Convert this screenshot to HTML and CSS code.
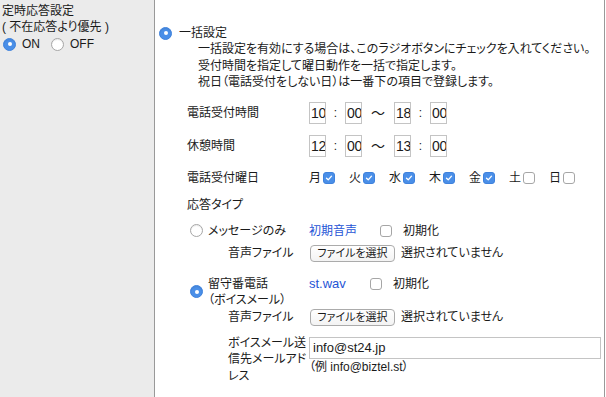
FILE: index.html
```html
<!DOCTYPE html>
<html>
<head>
  <title>定時応答設定</title>
  <link rel="stylesheet" href="styles.css">
</head>
<body>
  <div class="setting-row">
    <!-- left column: setting name -->
    <div class="label-cell">
      <div>定時応答設定</div>
      <div>( 不在応答より優先 )</div>
      <div class="onoff">
        <span class="radio on"></span><span class="radio-text">ON</span>
        <span class="radio"></span><span class="radio-text">OFF</span>
      </div>
    </div>
    <!-- right column: values -->
    <div class="value-cell">
      <div class="bulk-head">
        <span class="radio on"></span><span class="bulk-title">一括設定</span>
      </div>
      <div class="desc">
        一括設定を有効にする場合は、このラジオボタンにチェックを入れてください。<br>
        受付時間を指定して曜日動作を一括で指定します。<br>
        祝日（電話受付をしない日）は一番下の項目で登録します。
      </div>
      <div class="settings">
        <div class="time-row">
          <div class="label">電話受付時間</div>
          <span class="time-box">10</span><span class="colon">:</span><span class="time-box">00</span>
          <span class="tilde">〜</span>
          <span class="time-box">18</span><span class="colon">:</span><span class="time-box">00</span>
        </div>
        <div class="time-row">
          <div class="label">休憩時間</div>
          <span class="time-box">12</span><span class="colon">:</span><span class="time-box">00</span>
          <span class="tilde">〜</span>
          <span class="time-box">13</span><span class="colon">:</span><span class="time-box">00</span>
        </div>
        <div class="days-row">
          <div class="label">電話受付曜日</div>
          <span class="day">月<span class="cb on"><svg viewBox="0 0 12 12"><path d="M3 6.2 L5.1 8.2 L9 3.8"/></svg></span></span>
          <span class="day">火<span class="cb on"><svg viewBox="0 0 12 12"><path d="M3 6.2 L5.1 8.2 L9 3.8"/></svg></span></span>
          <span class="day">水<span class="cb on"><svg viewBox="0 0 12 12"><path d="M3 6.2 L5.1 8.2 L9 3.8"/></svg></span></span>
          <span class="day">木<span class="cb on"><svg viewBox="0 0 12 12"><path d="M3 6.2 L5.1 8.2 L9 3.8"/></svg></span></span>
          <span class="day">金<span class="cb on"><svg viewBox="0 0 12 12"><path d="M3 6.2 L5.1 8.2 L9 3.8"/></svg></span></span>
          <span class="day">土<span class="cb"></span></span>
          <span class="day">日<span class="cb"></span></span>
        </div>
        <div class="type-title">応答タイプ</div>

        <!-- message only -->
        <div class="type-row msg-row">
          <div class="type-label">
            <span class="radio"></span><span class="type-name">メッセージのみ</span>
          </div>
          <span class="link-text">初期音声</span>
          <span class="cb"></span><span class="cb-text">初期化</span>
        </div>
        <div class="file-row">
          <div class="sub-label">音声ファイル</div>
          <span class="file-btn">ファイルを選択</span>
          <span class="file-none">選択されていません</span>
        </div>

        <!-- voice mail -->
        <div class="type-row vm-row">
          <div class="type-label">
            <span class="radio on"></span><span class="type-name">留守番電話<br>（ボイスメール）</span>
          </div>
          <span class="link-text wav">st.wav</span>
          <span class="cb"></span><span class="cb-text">初期化</span>
        </div>
        <div class="file-row file-row-2">
          <div class="sub-label">音声ファイル</div>
          <span class="file-btn">ファイルを選択</span>
          <span class="file-none">選択されていません</span>
        </div>
        <div class="mail-row">
          <div class="sub-label mail-label">ボイスメール送信先メールアドレス</div>
          <div class="mail-value">
            <div class="mail-input">info@st24.jp</div>
            <div class="mail-example">（例 info@biztel.st）</div>
          </div>
        </div>
      </div>
    </div>
  </div>
</body>
</html>
```

FILE: styles.css
```css
/*Page*/
body {
  margin: 0;
  background-color: white;
  color: #1a1a1a;
  font-family: "Liberation Sans", "Noto Sans CJK JP", sans-serif;
  font-size: 12px;
  line-height: 16px;
  font-feature-settings: "palt";
}
/*One setting row: name on the left, values on the right*/
.setting-row {
  display: flex;
  min-height: 100vh;
}
.label-cell {
  width: 155px;
  padding: 3px 0 0 2px;
  box-sizing: border-box;
  background-color: #ebebeb;
  border-right: 1px solid #999;
}
.value-cell {
  width: 450px;
  padding: 25px 3px 0 4px;
  box-sizing: border-box;
  border-right: 1px solid #999;
}
/*Radio buttons*/
.radio {
  display: inline-block;
  width: 13px;
  height: 13px;
  box-sizing: border-box;
  border-radius: 50%;
  background-color: white;
  border: 1px solid #a6a6a6;
  box-shadow: inset 0 1px 1px rgba(0, 0, 0, 0.08);
  position: relative;
  flex: none;
}
.radio.on {
  background-color: #4a8fe8;
  border-color: #3f82dc;
}
/*White dot in a selected radio*/
.radio.on::after {
  content: "";
  position: absolute;
  left: 3.5px;
  top: 3.5px;
  width: 4px;
  height: 4px;
  border-radius: 50%;
  background-color: white;
}
/*Checkboxes*/
.cb {
  display: inline-block;
  width: 12px;
  height: 12px;
  box-sizing: border-box;
  border: 1px solid #a6a6a6;
  border-radius: 3px;
  background-color: white;
  flex: none;
}
.cb.on {
  background-color: #4a8fe8;
  border-color: #3f82dc;
}
.cb svg {
  display: block;
  width: 10px;
  height: 10px;
  fill: none;
  stroke: white;
  stroke-width: 1.6;
  stroke-linecap: round;
  stroke-linejoin: round;
}
/*ON / OFF*/
.onoff {
  display: flex;
  align-items: center;
  height: 18px;
  padding-left: 1px;
}
.radio-text {
  margin: 0 11px 0 6px;
}
/*Bulk setting heading and help text*/
.bulk-head {
  display: flex;
  align-items: center;
  height: 16px;
}
.bulk-title {
  margin-left: 7px;
}
.desc {
  margin-left: 39px;
  line-height: 16.5px;
}
/*Settings table*/
.settings {
  margin-left: 28px;
  margin-top: 6px;
}
.label {
  width: 122px;
  flex: none;
}
.time-row {
  display: flex;
  align-items: center;
  height: 33px;
}
.time-box {
  display: inline-block;
  width: 17px;
  height: 22px;
  box-sizing: border-box;
  border: 1px solid #c4c4c4;
  font-size: 14px;
  line-height: 20px;
  padding-left: 1px;
  overflow: hidden;
  letter-spacing: -0.3px;
}
.colon {
  width: 19px;
  text-align: center;
}
.tilde {
  width: 32px;
  text-align: center;
  font-size: 14px;
}
.days-row {
  display: flex;
  align-items: center;
  height: 30px;
}
.day {
  display: flex;
  align-items: center;
  width: 40px;
}
.day .cb {
  margin-left: 2px;
}
.type-title {
  height: 24px;
  line-height: 24px;
}
/*Response type rows*/
.type-row {
  display: flex;
}
.type-label {
  width: 122px;
  flex: none;
  display: flex;
  align-items: center;
  padding-left: 3px;
  box-sizing: border-box;
}
.type-name {
  margin-left: 5px;
}
.msg-row {
  height: 28px;
  align-items: center;
}
.vm-row {
  margin-top: 14px;
  align-items: flex-start;
}
.link-text {
  color: #1f55d6;
  width: 71px;
}
.link-text.wav {
  font-size: 13px;
  width: 61px;
}
.cb-text {
  margin-left: 11px;
}
.type-row .cb {
  align-self: center;
}
.vm-row .cb {
  align-self: flex-start;
  margin-top: 2px;
}
/*File chooser rows*/
.file-row {
  display: flex;
  align-items: center;
  height: 17px;
}
.file-row-2 {
  margin-top: 1px;
}
.sub-label {
  width: 81px;
  margin-left: 41px;
  flex: none;
}
.file-btn {
  display: inline-block;
  width: 85px;
  height: 17px;
  box-sizing: border-box;
  margin-left: 1px;
  border: 1px solid #ababab;
  border-radius: 4px;
  background: linear-gradient(#ffffff, #f3f3f3);
  font-size: 11px;
  line-height: 15px;
  text-align: center;
}
.file-none {
  margin-left: 6px;
}
/*Voice mail address*/
.mail-row {
  display: flex;
  margin-top: 9px;
}
.mail-label {
  line-height: 16.5px;
}
.mail-value {
  flex: 1;
  padding-top: 2px;
}
.mail-input {
  height: 22px;
  box-sizing: border-box;
  border: 1px solid #c4c4c4;
  padding-left: 3px;
  font-size: 13px;
  line-height: 20px;
}
.mail-example {
  line-height: 16.5px;
}
```
